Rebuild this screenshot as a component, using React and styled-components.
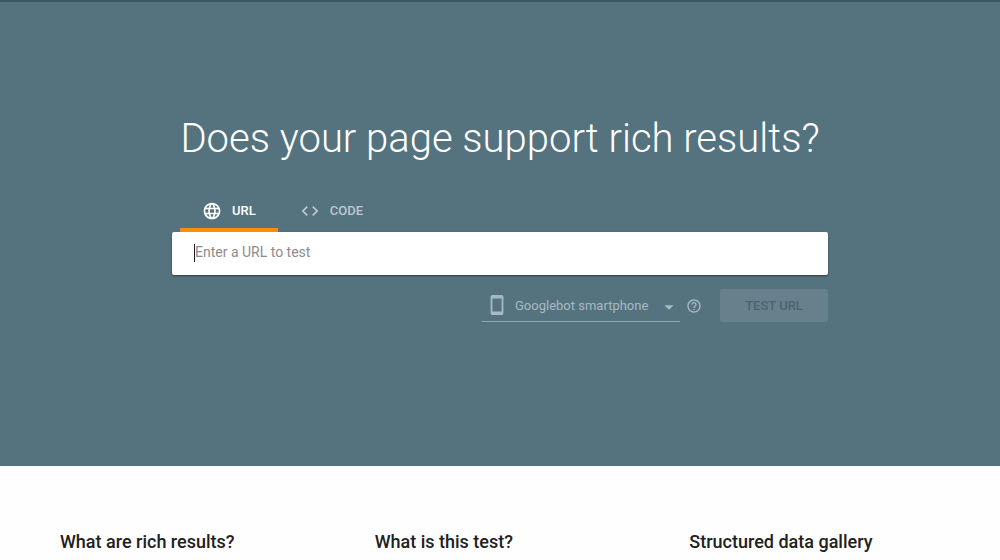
import React, { useState } from "react";
import styled, { createGlobalStyle } from "styled-components";
import { MdLanguage, MdCode, MdStayCurrentPortrait, MdArrowDropDown, MdHelpOutline } from "react-icons/md";

const GlobalStyle = createGlobalStyle`
  *, *::before, *::after { box-sizing: border-box; }
  body {
    margin: 0;
    background: #fefefe;
    font-family: Roboto, sans-serif;
    color: #212121;
  }
  button, input, select { font-family: inherit; }
`;

const Hero = styled.header`
  display: flex;
  flex-direction: column;
  align-items: center;
  padding: 112px 24px 144px;
  border-top: 2px solid #3c5766;
  background: #55727f;
`;

const Title = styled.h1`
  margin: 0;
  font-size: 40px;
  font-weight: 300;
  line-height: 50px;
  text-align: center;
  color: #fff;
`;

const TestForm = styled.form`
  width: 100%;
  max-width: 656px;
  margin-top: 26px;
`;

const Tabs = styled.div`
  display: flex;
  padding-left: 8px;
`;

const Tab = styled.button`
  display: flex;
  align-items: center;
  gap: 10px;
  height: 42px;
  padding: 3px 22px 0;
  border: 0;
  border-bottom: 4px solid ${({ $active }) => ($active ? "#f78f08" : "transparent")};
  background: none;
  color: ${({ $active }) => ($active ? "#fff" : "#bcc9cf")};
  font-size: 13px;
  font-weight: 500;
  cursor: pointer;

  svg { width: 20px; height: 20px; stroke-width: 0; }
`;

const Field = styled.div`
  display: flex;
  align-items: center;
  height: 43px;
  padding: 0 22px 2px;
  border-radius: 2px;
  background: #fff;
  box-shadow: 0 1px 2px rgba(0, 0, 0, 0.45);
`;

const Caret = styled.span`
  flex: none;
  width: 1px;
  height: 18px;
  background: #212121;
`;

const UrlInput = styled.input`
  flex: 1;
  min-width: 0;
  height: 32px;
  padding: 0 0 1px;
  border: 0;
  outline: 0;
  background: transparent;
  font-size: 14px;
  color: #212121;

  &::placeholder { color: #8c8c8c; opacity: 1; }
`;

const Actions = styled.div`
  display: flex;
  align-items: center;
  justify-content: flex-end;
  margin-top: 14px;
`;

const AgentPicker = styled.label`
  display: flex;
  align-items: center;
  width: 198px;
  height: 33px;
  padding: 0 0 0 4px;
  border-bottom: 1px solid #8eaab5;
  color: #a6bac3;

  svg { flex: none; }
`;

const AgentSelect = styled.select`
  appearance: none;
  flex: 1;
  min-width: 0;
  margin-left: 7px;
  padding: 0;
  border: 0;
  background: transparent;
  color: inherit;
  font-size: 13px;
  opacity: 1;
`;

const DropArrow = styled(MdArrowDropDown)`
  width: 22px;
  height: 22px;
  align-self: flex-end;
  margin-bottom: 3px;
`;

const HelpButton = styled.button`
  display: flex;
  margin: 0 18px 0 6px;
  padding: 0;
  border: 0;
  background: none;
  color: #a6bac3;
`;

const SubmitButton = styled.button`
  width: 108px;
  height: 33px;
  padding: 0;
  border: 0;
  border-radius: 2px;
  background: #66808c;
  color: #4c6471;
  font-size: 13px;
  font-weight: 500;
`;

const Topics = styled.main`
  display: grid;
  grid-template-columns: repeat(3, 1fr);
  padding: 64px 28px 0;
`;

const Topic = styled.section`
  padding: 0 32px;
`;

const TopicTitle = styled.h2`
  margin: 0;
  font-size: 18px;
  font-weight: 500;
  line-height: 24px;
`;

const topics = ["What are rich results?", "What is this test?", "Structured data gallery"];

export default function App() {
  const [mode, setMode] = useState("url");
  return (
    <>
      <GlobalStyle />
      <Hero>
        <Title>Does your page support rich results?</Title>
        <TestForm>
          <Tabs role="tablist">
            <Tab type="button" role="tab" aria-selected={mode === "url"} $active={mode === "url"} onClick={() => setMode("url")}>
              <MdLanguage />
              URL
            </Tab>
            <Tab type="button" role="tab" aria-selected={mode === "code"} $active={mode === "code"} onClick={() => setMode("code")}>
              <MdCode />
              CODE
            </Tab>
          </Tabs>
          <Field>
            <Caret />
            <UrlInput type="text" aria-label="Enter a URL to test" placeholder="Enter a URL to test" />
          </Field>
          <Actions>
            <AgentPicker>
              <MdStayCurrentPortrait size={22} />
              <AgentSelect aria-label="User agent" disabled>
                <option>Googlebot smartphone</option>
              </AgentSelect>
              <DropArrow />
            </AgentPicker>
            <HelpButton type="button" aria-label="Help">
              <MdHelpOutline size={16} />
            </HelpButton>
            <SubmitButton type="submit" disabled>TEST URL</SubmitButton>
          </Actions>
        </TestForm>
      </Hero>
      <Topics>
        {topics.map((title) => (
          <Topic key={title}>
            <TopicTitle>{title}</TopicTitle>
          </Topic>
        ))}
      </Topics>
    </>
  );
}
